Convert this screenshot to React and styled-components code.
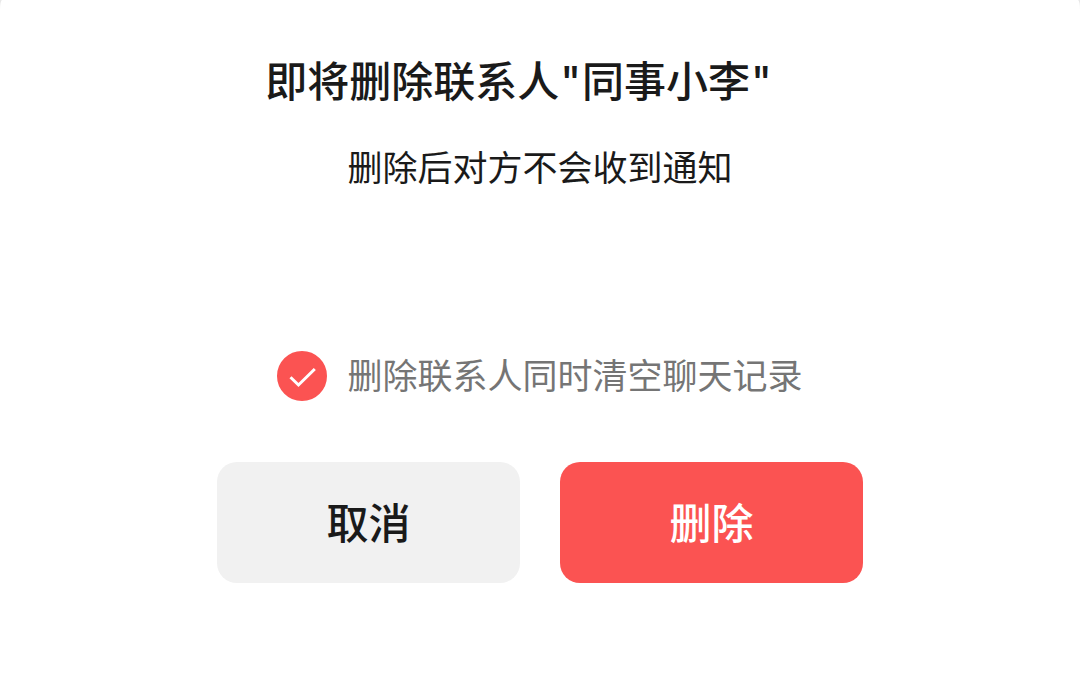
import React, { useState } from "react";
import styled, { createGlobalStyle } from "styled-components";

const GlobalStyle = createGlobalStyle`
  * { box-sizing: border-box; }
  html { background: #e8e8e8; }
  body {
    margin: 0;
    color: #1a1a1a;
    font-family: "Noto Sans CJK SC", sans-serif;
  }
`;

const Sheet = styled.main`
  display: flex;
  flex-direction: column;
  align-items: center;
  min-height: 100vh;
  padding: 47px 24px 92px;
  background: #fff;
  border-radius: 2px 2px 0 0 / 10px 10px 0 0;
`;

const Title = styled.h1`
  margin: 0;
  padding-right: 42px;
  font-size: 42px;
  line-height: 64px;
  font-weight: 500;
`;

const Quote = styled.span`
  font-family: Inter, sans-serif;
  line-height: 1;
  padding: 0 1px;
`;

const Description = styled.p`
  margin: 29px 0 0;
  font-size: 35px;
  line-height: 52px;
`;

const Option = styled.label`
  display: flex;
  align-items: center;
  gap: 20px;
  min-height: 52px;
  margin-top: 158px;
  color: #757575;
  font-size: 35px;
  line-height: 48px;
  cursor: pointer;
`;

const OptionText = styled.span`
  padding-bottom: 4px;
`;

const CheckMark = styled.span`
  display: grid;
  flex: none;
  width: 50px;
  height: 50px;
  > * { grid-area: 1 / 1; }
`;

const CheckInput = styled.input`
  width: 50px;
  height: 50px;
  margin: 0;
  appearance: none;
  border: 2px solid #bbb;
  border-radius: 50%;
  &:checked { background: #fb5352; border-color: #fb5352; }
  &:not(:checked) + svg { visibility: hidden; }
`;

const CheckIcon = styled.svg`
  width: 50px;
  height: 50px;
  pointer-events: none;
`;

const Actions = styled.div`
  display: flex;
  justify-content: center;
  gap: 40px;
  width: 100%;
  margin-top: 60px;
`;

const Button = styled.button`
  flex: 0 1 303px;
  height: 121px;
  padding: 0 0 4px;
  border: 0;
  border-radius: 20px;
  background: ${({ $danger }) => ($danger ? "#fb5352" : "#f1f1f1")};
  color: ${({ $danger }) => ($danger ? "#fff" : "#1a1a1a")};
  font-family: inherit;
  font-size: 42px;
  line-height: 64px;
  font-weight: 500;
  cursor: pointer;
`;

export default function App() {
  const [clear, setClear] = useState(true);
  return (
    <>
      <GlobalStyle />
      <Sheet>
        <Title>
          即将删除联系人<Quote>"</Quote>同事小李<Quote>"</Quote>
        </Title>
        <Description>删除后对方不会收到通知</Description>
        <Option>
          <CheckMark>
            <CheckInput type="checkbox" checked={clear} onChange={(e) => setClear(e.target.checked)} />
            <CheckIcon viewBox="0 0 50 50" aria-hidden="true">
              <path d="M13.5 26.2L21.5 34L37.8 18" fill="none" stroke="#fff" strokeWidth="3" />
            </CheckIcon>
          </CheckMark>
          <OptionText>删除联系人同时清空聊天记录</OptionText>
        </Option>
        <Actions>
          <Button type="button">取消</Button>
          <Button type="button" $danger>删除</Button>
        </Actions>
      </Sheet>
    </>
  );
}
